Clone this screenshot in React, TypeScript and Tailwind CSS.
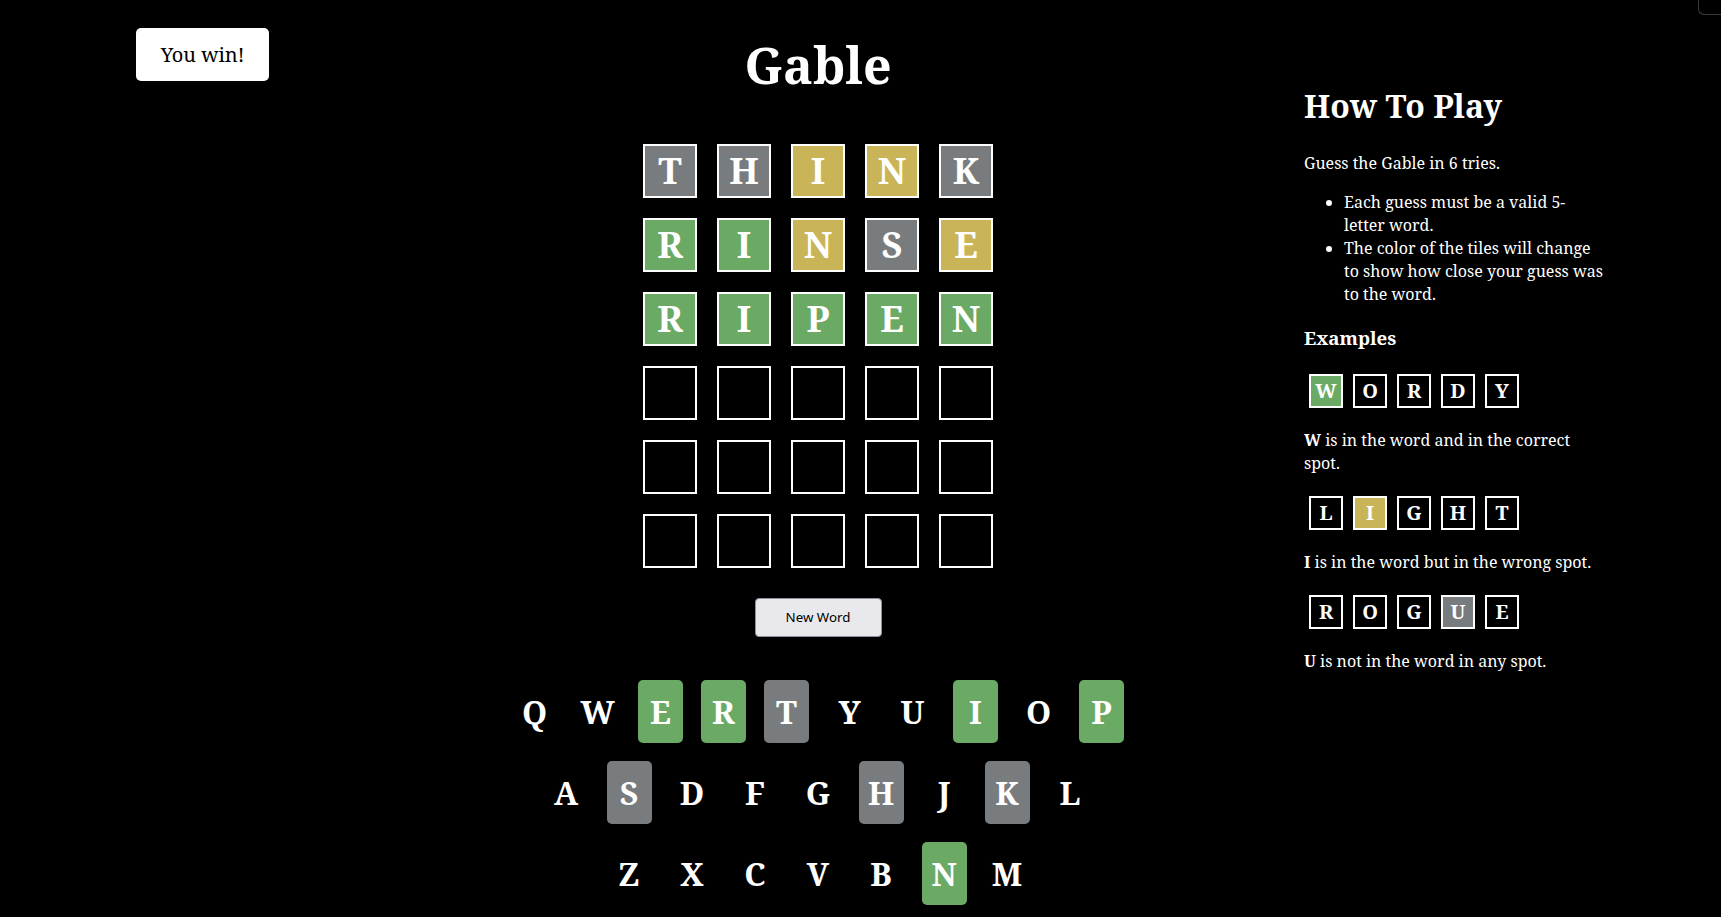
import React from 'react';

type Mark = 'g' | 'y' | 'x' | '';

const serif = { fontFamily: '"Noto Serif", "DejaVu Serif", serif' };

const fill: Record<Mark, string> = {
  g: 'bg-[#6aaa64]',
  y: 'bg-[#c9b458]',
  x: 'bg-[#787c7e]',
  '': 'bg-black',
};

const guesses: { word: string; marks: Mark[] }[] = [
  { word: 'THINK', marks: ['x', 'x', 'y', 'y', 'x'] },
  { word: 'RINSE', marks: ['g', 'g', 'y', 'x', 'y'] },
  { word: 'RIPEN', marks: ['g', 'g', 'g', 'g', 'g'] },
];

const keyRows = ['QWERTYUIOP', 'ASDFGHJKL', 'ZXCVBNM'];
const keyMarks: Record<string, Mark> = {
  E: 'g', R: 'g', I: 'g', P: 'g', N: 'g',
  T: 'x', S: 'x', H: 'x', K: 'x',
};

function Tile({ letter, mark }: { letter: string; mark: Mark }) {
  return (
    <div
      className={`w-[54px] h-[54px] border-2 border-white flex items-center justify-center text-white text-[36px] font-bold ${fill[mark]}`}
    >
      {letter}
    </div>
  );
}

function SmallTile({ letter, mark }: { letter: string; mark: Mark }) {
  return (
    <div
      className={`w-[34px] h-[34px] border-2 border-white flex items-center justify-center text-white text-[20px] font-bold ${fill[mark]}`}
    >
      {letter}
    </div>
  );
}

function Example({ word, at, mark }: { word: string; at: number; mark: Mark }) {
  return (
    <div className="flex gap-[10px] ml-[5px]">
      {word.split('').map((l, i) => (
        <SmallTile key={i} letter={l} mark={i === at ? mark : ''} />
      ))}
    </div>
  );
}

export default function App() {
  const rows = [...guesses];
  while (rows.length < 6) rows.push({ word: '     ', marks: ['', '', '', '', ''] });

  return (
    <div className="relative min-h-[917px] w-full bg-black text-white flex" style={serif}>
      {/* left: result */}
      <div className="w-[460px] pl-[136px] pt-[28px]">
        <button className="w-[133px] h-[53px] bg-white text-black text-[20px] rounded-[5px]">
          You win!
        </button>
      </div>

      {/* middle: board + keyboard */}
      <div className="w-[716px] flex flex-col items-center">
        <h1 className="mt-[31px] text-[50px] font-bold leading-[68px]">Gable</h1>

        <div className="mt-[45px] flex flex-col gap-[20px]">
          {rows.map((r, i) => (
            <div key={i} className="flex gap-[20px]">
              {r.word.split('').map((l, j) => (
                <Tile key={j} letter={l.trim()} mark={r.marks[j]} />
              ))}
            </div>
          ))}
        </div>

        <button
          className="mt-[30px] w-[127px] h-[39px] bg-[#e9e9ed] border border-[#8f8f9d] rounded-[4px] text-black text-[13.33px]"
          style={{ fontFamily: '"Noto Sans", "Open Sans", sans-serif' }}
        >
          New Word
        </button>

        <div className="mt-[43px] flex flex-col items-center gap-[18px]">
          {keyRows.map((row) => (
            <div key={row} className="flex gap-[18px]">
              {row.split('').map((k) => (
                <div
                  key={k}
                  className={`w-[45px] h-[63px] rounded-[5px] flex items-center justify-center text-[32px] font-bold ${
                    keyMarks[k] ? fill[keyMarks[k]] : ''
                  }`}
                >
                  {k}
                </div>
              ))}
            </div>
          ))}
        </div>
      </div>

      {/* right: how to play */}
      <div className="pl-[128px] pt-[84px]">
        <div className="w-[302px] text-[16px]">
          <h2 className="text-[32px] font-bold leading-[44px]">How To Play</h2>
          <p className="mt-[24px] leading-[22px]">Guess the Gable in 6 tries.</p>
          <ul className="mt-[17px] list-disc pl-[40px] pr-[2px] leading-[23px]">
            <li>Each guess must be a valid 5-letter word.</li>
            <li>The color of the tiles will change to show how close your guess was to the word.</li>
          </ul>
          <h3 className="mt-[19px] text-[18.72px] font-bold leading-[25px]">Examples</h3>

          <div className="mt-[24px]">
            <Example word="WORDY" at={0} mark="g" />
          </div>
          <p className="mt-[21px] leading-[23px]">
            <b>W</b> is in the word and in the correct spot.
          </p>

          <div className="mt-[21px]">
            <Example word="LIGHT" at={1} mark="y" />
          </div>
          <p className="mt-[21px] leading-[23px]">
            <b>I</b> is in the word but in the wrong spot.
          </p>

          <div className="mt-[21px]">
            <Example word="ROGUE" at={3} mark="x" />
          </div>
          <p className="mt-[21px] leading-[23px]">
            <b>U</b> is not in the word in any spot.
          </p>
        </div>
      </div>

      <div className="absolute right-0 top-[-20px] w-[23px] h-[35px] border-l border-b border-[#3a3a3a] rounded-bl-[6px]" />
    </div>
  );
}
